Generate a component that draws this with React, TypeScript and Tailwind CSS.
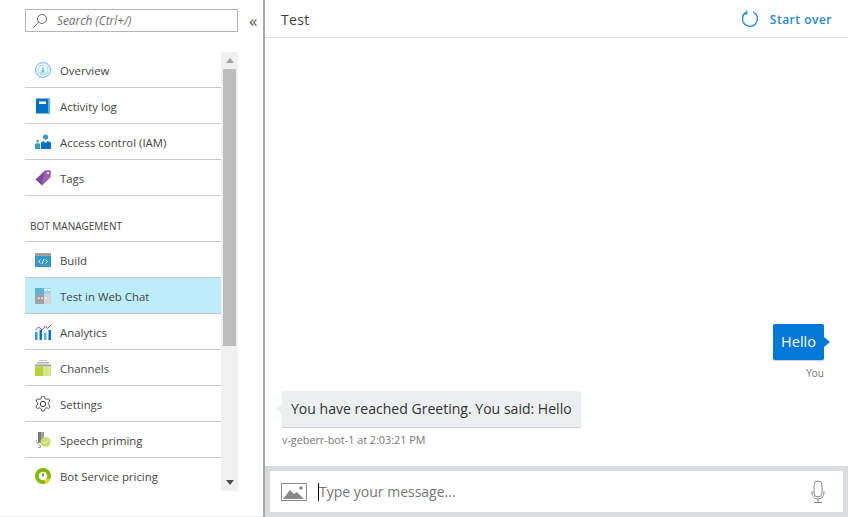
import React from 'react';

const font = { fontFamily: '"Open Sans", "Noto Sans", sans-serif' };

const OverviewIcon = () => (
  <svg width="16" height="16" viewBox="0 0 16 16" fill="none">
    <circle cx="8" cy="8" r="7.400" stroke="#59b4d9" strokeWidth="1" />
    <circle cx="8" cy="8" r="5" stroke="#a8def4" strokeWidth="1.200" />
    <path d="M8 5v5M6.200 8.400 8 10.200l1.800-1.800" stroke="#3a9ed4" strokeWidth="1" />
    <path d="M5 11h6" stroke="#7fcdee" strokeWidth="1" />
  </svg>
);

const LogIcon = () => (
  <svg width="16" height="16" viewBox="0 0 16 16">
    <rect x="1" y="0.500" width="14" height="15" rx="0.500" fill="#0072c6" />
    <rect x="13" y="0.500" width="2" height="15" fill="#59b4d9" />
    <rect x="4" y="3.500" width="7" height="2.500" fill="#fff" />
  </svg>
);

const IamIcon = () => (
  <svg width="16" height="16" viewBox="0 0 16 16">
    <circle cx="10.600" cy="3" r="2.600" fill="#3999c6" />
    <path d="M6 15V8.500l2.500-1.500 2.100 2 2.100-2L16 8.500V15z" fill="#0072c6" />
    <circle cx="2.600" cy="7" r="1.600" fill="#59b4d9" />
    <path d="M0 15v-5l1.500-.8h2.200L5 10v5z" fill="#3999c6" />
  </svg>
);

const TagIcon = () => (
  <svg width="16" height="16" viewBox="0 0 16 16">
    <path d="M10 0.500h5.500v6.500L7 15.500 0.500 9.500z" fill="#804998" />
    <path d="M10 0.500h5.500v6.500L7 15.500 7 12z" fill="#9b62b5" />
    <circle cx="13" cy="3" r="1" fill="#fff" />
  </svg>
);

const BuildIcon = () => (
  <svg width="16" height="14" viewBox="0 0 16 14">
    <rect width="16" height="3" fill="#a0a1a2" />
    <rect y="3" width="16" height="11" fill="#3999c6" />
    <path d="M5.500 6.500 3.500 8.500l2 2M10.500 6.500l2 2-2 2M9 6l-2 5" stroke="#fff" strokeWidth="0.800" fill="none" />
  </svg>
);

const WebChatIcon = () => (
  <svg width="16" height="16" viewBox="0 0 16 16">
    <rect width="9" height="6" fill="#59b4d9" />
    <rect x="9" width="7" height="6" fill="#9fd5ea" />
    <rect x="9.500" y="1" width="2.500" height="1.500" fill="#fff" />
    <rect x="13" y="1" width="2.500" height="1.500" fill="#fff" />
    <rect y="6" width="9" height="10" fill="#a0a1a2" />
    <rect x="9" y="6" width="7" height="10" fill="#d2d3d4" />
    <rect x="3" y="9.500" width="1.500" height="1.500" fill="#fff" />
    <rect x="6.500" y="9.500" width="1.500" height="1.500" fill="#fff" />
    <rect x="10" y="9.500" width="1.500" height="1.500" fill="#fff" />
  </svg>
);

const AnalyticsIcon = () => (
  <svg width="16" height="16" viewBox="0 0 16 16">
    <path d="M0 6.500 3.500 3l3.500 3 3.500-4 2 2.500L16 1" stroke="#804998" strokeWidth="1" fill="none" />
    <rect x="0" y="8" width="2.500" height="8" fill="#3999c6" />
    <rect x="4.500" y="6" width="2.500" height="10" fill="#0072c6" />
    <rect x="9" y="9" width="2.500" height="7" fill="#59b4d9" />
    <rect x="13.500" y="6" width="2.500" height="10" fill="#0072c6" />
  </svg>
);

const ChannelsIcon = () => (
  <svg width="16" height="16" viewBox="0 0 16 16">
    <rect x="4" y="0" width="8" height="1" fill="#c4c5c6" />
    <rect x="2" y="2" width="12" height="1.500" fill="#b0b1b2" />
    <rect y="4.500" width="16" height="2" fill="#a0a1a2" />
    <rect y="6.500" width="8" height="9.500" fill="#b8d432" />
    <rect x="8" y="6.500" width="8" height="9.500" fill="#d5e68f" />
  </svg>
);

const GearIcon = () => (
  <svg width="16" height="16" viewBox="2 1.500 20 21" fill="none" stroke="#3e3e3e" strokeWidth="1.300" strokeLinejoin="round">
    <path d="M12.220 1.500h-.440a2 2 0 0 0-2 2v.180a2 2 0 0 1-1 1.730l-.430.250a2 2 0 0 1-2 0l-.150-.080a2 2 0 0 0-2.730.730l-.220.380a2 2 0 0 0 .730 2.730l.150.100a2 2 0 0 1 1 1.720v.510a2 2 0 0 1-1 1.740l-.150.090a2 2 0 0 0-.730 2.730l.220.380a2 2 0 0 0 2.730.730l.150-.080a2 2 0 0 1 2 0l.430.250a2 2 0 0 1 1 1.730v.180a2 2 0 0 0 2 2h.440a2 2 0 0 0 2-2v-.180a2 2 0 0 1 1-1.730l.430-.250a2 2 0 0 1 2 0l.150.080a2 2 0 0 0 2.730-.730l.220-.390a2 2 0 0 0-.730-2.730l-.150-.080a2 2 0 0 1-1-1.740v-.500a2 2 0 0 1 1-1.740l.150-.090a2 2 0 0 0 .730-2.730l-.220-.380a2 2 0 0 0-2.730-.730l-.150.080a2 2 0 0 1-2 0l-.430-.250a2 2 0 0 1-1-1.730V3.500a2 2 0 0 0-2-2z" />
    <circle cx="12" cy="12" r="3.500" />
  </svg>
);

const SpeechIcon = () => (
  <svg width="16" height="16" viewBox="0 0 16 16">
    <rect x="3" y="0" width="6" height="11" rx="1" fill="#a0a1a2" />
    <rect x="3" y="0" width="3" height="11" fill="#7a7a7a" />
    <path d="M1.500 8c0 3.500 2 5.500 4 5.500V15.500H3" stroke="#a0a1a2" strokeWidth="1" fill="none" />
    <circle cx="10.500" cy="10" r="5" fill="#c5dd6a" />
    <path d="M8.500 10l1.500 1.500 2.500-2.500" stroke="#fff" strokeWidth="1" fill="none" />
  </svg>
);

const PricingIcon = () => (
  <svg width="16" height="16" viewBox="0 0 16 16">
    <circle cx="8" cy="8" r="8" fill="#7fba00" />
    <path d="M15.500 10.500A8 8 0 0 1 10.500 15.500L9 11z" fill="#fcd116" />
    <circle cx="8" cy="8" r="4.300" fill="#fff" />
    <rect x="7.400" y="5.500" width="1.200" height="3" fill="#3e3e3e" />
  </svg>
);

const topItems = [
  { label: 'Overview', icon: <OverviewIcon /> },
  { label: 'Activity log', icon: <LogIcon /> },
  { label: 'Access control (IAM)', icon: <IamIcon /> },
  { label: 'Tags', icon: <TagIcon /> },
];

const botItems = [
  { label: 'Build', icon: <BuildIcon /> },
  { label: 'Test in Web Chat', icon: <WebChatIcon />, active: true },
  { label: 'Analytics', icon: <AnalyticsIcon /> },
  { label: 'Channels', icon: <ChannelsIcon /> },
  { label: 'Settings', icon: <GearIcon /> },
  { label: 'Speech priming', icon: <SpeechIcon /> },
  { label: 'Bot Service pricing', icon: <PricingIcon />, last: true },
];

type Item = { label: string; icon: React.ReactNode; active?: boolean; last?: boolean };

const NavRow = ({ item }: { item: Item }) => (
  <div
    className={`flex h-[36px] items-center pl-[10px] ${item.last ? '' : 'border-b border-[#c8c8c8]'} ${
      item.active ? 'bg-[#bdecfa]' : ''
    }`}
  >
    <span className="flex w-[25px] shrink-0 items-center">{item.icon}</span>
    <span className="pt-[2px] text-[11.400px] text-[#444]">{item.label}</span>
  </div>
);

export default function App() {
  return (
    <div className="flex h-[517px] w-[848px] overflow-hidden bg-white" style={font}>
      {/* Left blade */}
      <aside className="flex w-[263px] shrink-0 flex-col border-b border-[#e8e8e8] pl-[25px]">
        <div className="mt-[9px] flex items-center">
          <div className="flex h-[23px] w-[213px] items-center border border-[#b4b4b4] pl-[6px]">
            <svg width="16" height="16" viewBox="0 0 16 16" fill="none" stroke="#6a6a6a" strokeWidth="1">
              <circle cx="10" cy="6" r="4.500" />
              <path d="M6.800 9.200 1.500 14.500" />
            </svg>
            <span className="ml-[9px] text-[11.800px] italic text-[#6e6e6e]">Search (Ctrl+/)</span>
          </div>
          <span className="ml-[11px] text-[17px] leading-none text-[#555]">«</span>
        </div>

        <div className="mt-[20px] flex h-[439px] w-[213px]">
          <div className="w-[196px] shrink-0">
            {topItems.map((item) => (
              <NavRow key={item.label} item={item} />
            ))}
            <div className="flex h-[46px] items-end border-b border-[#c8c8c8] pb-[7px] pl-[5px] text-[10px] text-[#3e3e3e]">
              BOT MANAGEMENT
            </div>
            {botItems.map((item) => (
              <NavRow key={item.label} item={item} />
            ))}
          </div>
          <div className="flex w-[17px] flex-col items-center justify-between bg-[#f0f0f0]">
            <div className="flex w-full flex-col items-center">
              <div className="flex h-[17px] items-center">
                <div className="h-0 w-0 border-x-[4px] border-b-[5px] border-x-transparent border-b-[#a3a3a3]" />
              </div>
              <div className="h-[277px] w-[13px] bg-[#bdbdbd]" />
            </div>
            <div className="flex h-[17px] items-center">
              <div className="h-0 w-0 border-x-[4px] border-t-[5px] border-x-transparent border-t-[#505050]" />
            </div>
          </div>
        </div>
      </aside>

      <div className="w-[2px] shrink-0 bg-[#a8a8a8]" />

      {/* Chat panel */}
      <main className="flex min-w-0 flex-1 flex-col">
        <header className="flex h-[38px] shrink-0 items-center justify-between border-b border-[#e5e5e5] px-[16px] pt-[1px]">
          <span className="text-[14px] font-medium tracking-[0.3px] text-[#3e3e3e]">Test</span>
          <div className="flex items-center text-[#1e88d8]">
            <svg className="-mt-[1px]" width="18" height="18" viewBox="0 0 18 18" fill="none" stroke="#1e88d8" strokeWidth="1.300">
              <path d="M5.500 2.200A7.500 7.500 0 1 0 12 2" />
              <path d="M5.800 0.500v3.500H2.500" strokeWidth="1.100" />
            </svg>
            <span className="ml-[11px] pt-[1px] text-[12px] font-semibold tracking-[0.5px]">Start over</span>
          </div>
        </header>

        <div className="flex min-h-0 flex-1 flex-col justify-end pb-[19px]">
          <div className="flex flex-col items-end pr-[24px]">
            <div className="relative flex h-[36px] w-[51px] items-center justify-center rounded-[2px] bg-[#0078d7] text-[14.500px] text-white shadow-[0_1px_1px_rgba(0,0,0,0.2)]">
              Hello
              <div className="absolute right-[-6px] top-[13px] h-0 w-0 border-y-[5px] border-l-[6px] border-y-transparent border-l-[#0078d7]" />
            </div>
            <div className="mt-[6px] text-[10px] leading-[14px] text-[#767676]">You</div>
          </div>
          <div className="mt-[11px] flex flex-col items-start pl-[17px]">
            <div className="relative flex h-[36px] items-center rounded-[2px] bg-[#eceff1] px-[9px] text-[14.050px] text-[#333] shadow-[0_1px_1px_rgba(0,0,0,0.2)]">
              You have reached Greeting. You said: Hello
              <div className="absolute left-[-6px] top-[13px] h-0 w-0 border-y-[5px] border-r-[6px] border-y-transparent border-r-[#eceff1]" />
            </div>
            <div className="mt-[6px] text-[10.800px] leading-[14px] text-[#767676]">v-geberr-bot-1 at 2:03:21 PM</div>
          </div>
        </div>

        <footer className="h-[51px] shrink-0 bg-[#d9dcdf] p-[5px]">
          <div className="flex h-[41px] items-center bg-white pl-[11px] pr-[17px]">
            <svg width="26" height="18" viewBox="0 0 26 18">
              <rect x="0.500" y="0.500" width="25" height="17" fill="#fff" stroke="#8a8a8a" />
              <path d="M2 16 9 7l4 4 3-2 7 7z" fill="#8a8a8a" />
              <circle cx="20" cy="5" r="1.800" fill="#8a8a8a" />
            </svg>
            <div className="ml-[11px] h-[18px] w-px bg-black" />
            <span className="flex-1 text-[14px] text-[#767676]">Type your message...</span>
            <svg width="16" height="24" viewBox="0 0 16 24" fill="none" stroke="#8a8a8a" strokeWidth="1">
              <rect x="4" y="1" width="8" height="16" rx="4" />
              <path d="M2 11v2a6 6 0 0 0 12 0v-2M8 19v3M4 22.500h8" />
            </svg>
          </div>
        </footer>
      </main>
    </div>
  );
}
